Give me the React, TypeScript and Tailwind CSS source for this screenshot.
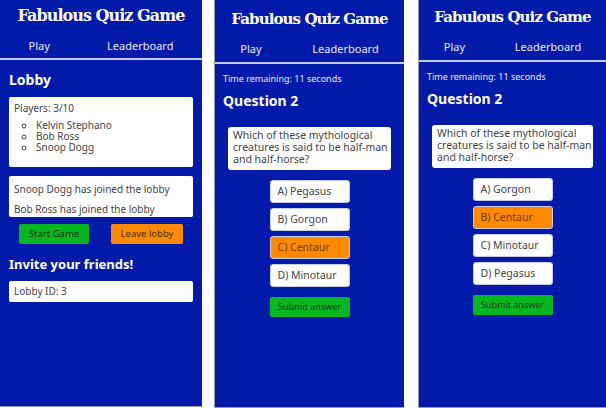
import React from "react";

const body = { fontFamily: '"Noto Sans", "Open Sans", sans-serif' };
const slab = { fontFamily: '"DejaVu Serif", "Liberation Serif", serif' };

const Header = ({ titleClass, navClass }: { titleClass: string; navClass: string }) => (
  <div>
    <h1 style={slab} className={`text-center font-bold text-white tracking-[-0.06em] ${titleClass}`}>
      Fabulous Quiz Game
    </h1>
    <nav className={`flex justify-around border-b-2 border-[#c3c9ea] text-[11px] text-[#e6e8f7] ${navClass}`}>
      <span>Play</span>
      <span>Leaderboard</span>
    </nav>
  </div>
);

const Lobby = () => (
  <div style={body} className="flex h-[407px] w-[202px] shrink-0 flex-col border-b border-[#9a9aa6] bg-[#031ba8]">
    <Header titleClass="pt-[4px] text-[16px] leading-[24px]" navClass="h-[32px] pt-[10px]" />
    <div className="px-[9px]">
      <h2 className="mt-[10px] text-[14px] font-bold leading-[20px] text-white">Lobby</h2>
      <div className="mt-[7px] h-[70px] rounded-[2px] bg-white px-[5px] pt-[5px] text-[10px] leading-[12px] text-[#444]">
        <p>Players: 3/10</p>
        <ul className="mt-[6px] list-[circle] pl-[22px] text-[10px] leading-[11px]">
          <li>Kelvin Stephano</li>
          <li>Bob Ross</li>
          <li>Snoop Dogg</li>
        </ul>
      </div>
      <div className="mt-[9px] h-[41px] overflow-hidden rounded-[2px] bg-white px-[5px] pt-[7px] text-[10px] leading-[12px] text-[#444]">
        <p>Snoop Dogg has joined the lobby</p>
        <p className="mt-[8px]">Bob Ross has joined the lobby</p>
      </div>
      <div className="mt-[7px] flex justify-between px-[10px]">
        <button className="h-[20px] w-[70px] rounded-[2px] bg-[#08b622] text-[9.5px] text-[#153a15]">Start Game</button>
        <button className="h-[20px] w-[72px] rounded-[2px] bg-[#ff8a00] text-[9.5px] text-[#4a2a00]">Leave lobby</button>
      </div>
      <h2 className="mt-[10px] text-[13px] font-bold leading-[20px] text-white">Invite your friends!</h2>
      <div className="mt-[7px] h-[21px] rounded-[2px] bg-white px-[5px] text-[10px] leading-[21px] text-[#444]">
        Lobby ID: 3
      </div>
    </div>
  </div>
);

const Question = ({
  options,
  picked,
  width,
  offset,
}: {
  options: string[];
  picked: number;
  width: string;
  offset: string;
}) => (
  <div
    style={body}
    className={`flex h-[408px] shrink-0 flex-col border-b border-l border-[#9a9aa6] bg-[#031ba8] ${width}`}
  >
    <Header titleClass={`${offset} text-[15px] leading-[24px]`} navClass="h-[33px] pt-[10px]" />
    <div className="px-[8px]">
      <p className="mt-[9px] text-[9px] leading-[12px] text-[#e6e8f7]">Time remaining: 11 seconds</p>
      <h2 className="mt-[7px] text-[14px] font-bold leading-[18px] text-white">Question 2</h2>
      <div className="mx-[5px] mt-[17px] h-[43px] rounded-[3px] bg-white px-[5px] pt-[2px] text-[10.5px] leading-[12px] whitespace-nowrap text-[#444]">
        <p>Which of these mythological</p>
        <p>creatures is said to be half-man</p>
        <p>and half-horse?</p>
      </div>
      <div className="mt-[10px] flex flex-col items-center gap-[5px]">
        {options.map((o, i) => (
          <button
            key={o}
            className={`h-[23px] w-[80px] rounded-[3px] border border-[#c8cbe6] px-[7px] text-left text-[10.5px] ${
              i === picked ? "bg-[#ff8a00] text-[#6a3a00]" : "bg-white text-[#444]"
            }`}
          >
            {o}
          </button>
        ))}
        <button className="mt-[5px] h-[20px] w-[80px] rounded-[2px] bg-[#08b622] text-[9px] text-[#153a15]">
          Submit answer
        </button>
      </div>
    </div>
  </div>
);

export default function App() {
  return (
    <div className="flex h-[409px] w-[606px] bg-white">
      <Lobby />
      <div className="w-[12px] shrink-0" />
      <Question
        width="w-[190px]"
        offset="pt-[7px]"
        options={["A) Pegasus", "B) Gorgon", "C) Centaur", "D) Minotaur"]}
        picked={2}
      />
      <div className="w-[14px] shrink-0" />
      <Question
        width="w-[188px]"
        offset="pt-[5px]"
        options={["A) Gorgon", "B) Centaur", "C) Minotaur", "D) Pegasus"]}
        picked={1}
      />
    </div>
  );
}
